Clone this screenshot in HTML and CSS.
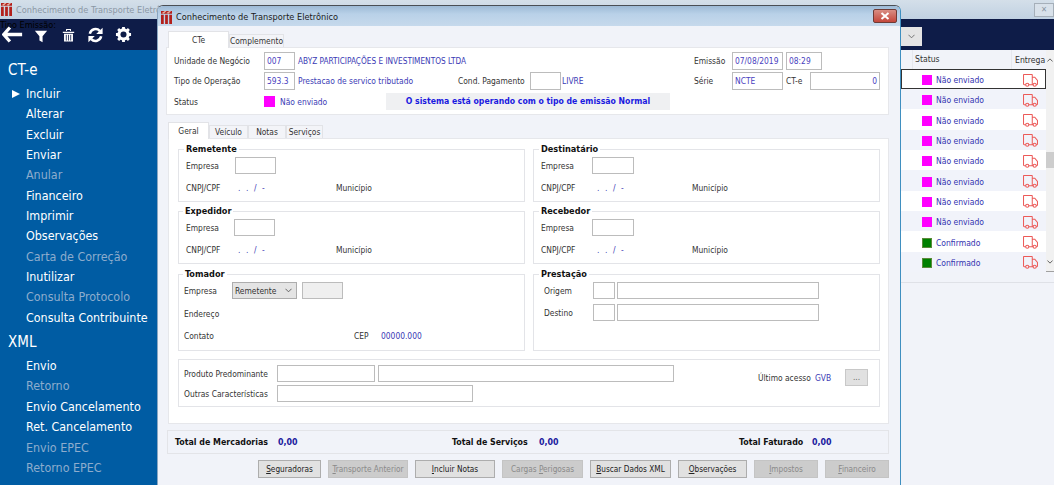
FILE: index.html
```html
<!DOCTYPE html>
<html lang="pt-BR">
<head>
<meta charset="utf-8">
<title>Conhecimento de Transporte Eletrônico</title>
<link rel="stylesheet" href="styles.css">
</head>
<body>
<svg class="defs" width="0" height="0" aria-hidden="true">
  <symbol id="truck" viewBox="0 0 16 14">
    <path d="M3 11.5H1.2a.7.7 0 0 1-.7-.7V1.2A.7.7 0 0 1 1.2.5h8a.7.7 0 0 1 .7.7v10.3H6M10 3.5h2.6l2.9 3.4v4a.6.6 0 0 1-.6.6H14M11 11.5h-1" fill="none" stroke="currentColor" stroke-width="1.1"/>
    <circle cx="4.5" cy="11.6" r="1.7" fill="none" stroke="currentColor" stroke-width="1.1"/>
    <circle cx="12.5" cy="11.6" r="1.7" fill="none" stroke="currentColor" stroke-width="1.1"/>
  </symbol>
  <symbol id="logo" viewBox="0 0 12 14">
    <path d="M0 0h12v3H0zM0 4h3v10H0zM4.5 4h3v10h-3zM9 4h3v10H9z" fill="#b3201c"/>
    <path d="M1 2l3-2h2L3 3zM6 2l3-2h2L8 3z" fill="#e8b0a0"/>
  </symbol>
</svg>

<div class="app">
  <header class="app-title">
    <svg class="logo"><use href="#logo"/></svg>
    <span>Conhecimento de Transporte Eletrônico</span>
    <span class="app-close">✕</span>
  </header>
  <div class="toolbar">
    <span class="behind">Tipo Emissão:</span>
    <svg class="tool tool-back" viewBox="0 0 24 18"><path d="M9 1L2 9l7 8M2 9h21" fill="none" stroke="#fff" stroke-width="3.8"/></svg>
    <svg class="tool tool-filter" viewBox="0 0 16 16"><path d="M1 2h14L9.8 8.4V15L6.2 13V8.4z" fill="#fff"/></svg>
    <svg class="tool tool-trash" viewBox="0 0 16 18"><path d="M1 5h14v1.6H1zM5 1.5h6V4H9.8V2.7H6.2V4H5zM2.5 7.5h11V17h-11z" fill="#fff"/><path d="M5.3 8.8v7M8 8.8v7M10.7 8.8v7" stroke="#0e1c48" stroke-width="1"/></svg>
    <svg class="tool tool-sync" viewBox="0 0 18 18"><path d="M2.6 7.5A6.6 6.6 0 0 1 13.8 4.4M15.4 10.5A6.6 6.6 0 0 1 4.2 13.6" fill="none" stroke="#fff" stroke-width="2.8"/><path d="M17 0.8V8h-7.2zM1 17.2V10h7.2z" fill="#fff"/></svg>
    <svg class="tool tool-gear" viewBox="0 0 18 18"><circle cx="9" cy="9" r="5" fill="none" stroke="#fff" stroke-width="3"/><path d="M9 1v16M1 9h16M3.3 3.3l11.4 11.4M14.7 3.3L3.3 14.7" stroke="#fff" stroke-width="3"/><circle cx="9" cy="9" r="3.2" fill="#0e1c48"/></svg>
    <span class="tool-select"><svg viewBox="0 0 8 5"><path d="M.5.5L4 4 7.5.5" fill="none" stroke="#666"/></svg></span>
  </div>
  <div class="app-body">
    <nav class="sidebar">
      <h2 class="side-head">CT-e</h2>
      <a class="side-item current">Incluir</a>
      <a class="side-item">Alterar</a>
      <a class="side-item">Excluir</a>
      <a class="side-item">Enviar</a>
      <a class="side-item off">Anular</a>
      <a class="side-item">Financeiro</a>
      <a class="side-item">Imprimir</a>
      <a class="side-item">Observações</a>
      <a class="side-item off">Carta de Correção</a>
      <a class="side-item">Inutilizar</a>
      <a class="side-item off">Consulta Protocolo</a>
      <a class="side-item">Consulta Contribuinte</a>
      <h2 class="side-head second">XML</h2>
      <a class="side-item">Envio</a>
      <a class="side-item off">Retorno</a>
      <a class="side-item">Envio Cancelamento</a>
      <a class="side-item">Ret. Cancelamento</a>
      <a class="side-item off">Envio EPEC</a>
      <a class="side-item off">Retorno EPEC</a>
    </nav>
    <main class="list">
      <div class="list-scroll">
        <div class="list-table">
          <div class="list-head"><span class="col-status">Status</span><span class="col-entrega">Entrega</span></div>
          <div class="list-row selected"><i class="sw pink"></i><span class="row-text">Não enviado</span><svg class="truck"><use href="#truck"/></svg></div>
          <div class="list-row alt"><i class="sw pink"></i><span class="row-text">Não enviado</span><svg class="truck"><use href="#truck"/></svg></div>
          <div class="list-row"><i class="sw pink"></i><span class="row-text">Não enviado</span><svg class="truck"><use href="#truck"/></svg></div>
          <div class="list-row alt"><i class="sw pink"></i><span class="row-text">Não enviado</span><svg class="truck"><use href="#truck"/></svg></div>
          <div class="list-row"><i class="sw pink"></i><span class="row-text">Não enviado</span><svg class="truck"><use href="#truck"/></svg></div>
          <div class="list-row alt"><i class="sw pink"></i><span class="row-text">Não enviado</span><svg class="truck"><use href="#truck"/></svg></div>
          <div class="list-row"><i class="sw pink"></i><span class="row-text">Não enviado</span><svg class="truck"><use href="#truck"/></svg></div>
          <div class="list-row alt"><i class="sw pink"></i><span class="row-text">Não enviado</span><svg class="truck"><use href="#truck"/></svg></div>
          <div class="list-row"><i class="sw green"></i><span class="row-text">Confirmado</span><svg class="truck"><use href="#truck"/></svg></div>
          <div class="list-row alt"><i class="sw green"></i><span class="row-text">Confirmado</span><svg class="truck"><use href="#truck"/></svg></div>
        </div>
        <div class="scrollbar">
          <svg viewBox="0 0 8 5"><path d="M.5 4.5L4 1l3.5 3.5" fill="none" stroke="#333"/></svg>
          <span class="thumb"></span>
          <svg viewBox="0 0 8 5"><path d="M.5.5L4 4 7.5.5" fill="none" stroke="#333"/></svg>
        </div>
      </div>
      <div class="list-foot"></div>
    </main>
  </div>
</div>

<section class="dialog">
  <header class="dlg-title">
    <svg class="logo"><use href="#logo"/></svg>
    <span class="dlg-title-text">Conhecimento de Transporte Eletrônico</span>
    <span class="dlg-close"><svg viewBox="0 0 10 8"><path d="M1.5 1l7 6M8.5 1l-7 6" stroke="#fff" stroke-width="2"/></svg></span>
  </header>
  <div class="dlg-body">
    <div class="tabs tabs-top">
      <span class="tab active t-cte">CTe</span>
      <span class="tab t-comp">Complemento</span>
    </div>
    <div class="panel-top">
      <div class="row row1">
        <span class="l w90">Unidade de Negócio</span>
        <span class="in w31 val">007</span>
        <span class="v w399 sp3 caps">ABYZ PARTICIPAÇÕES E INVESTIMENTOS LTDA</span>
        <span class="l w38">Emissão</span>
        <span class="in w51 val">07/08/2019</span>
        <span class="in w36 val ml3">08:29</span>
      </div>
      <div class="row row2">
        <span class="l w90">Tipo de Operação</span>
        <span class="in w31 val">593.3</span>
        <span class="v w163 sp3">Prestacao de servico tributado</span>
        <span class="l w72">Cond. Pagamento</span>
        <span class="in w31"></span>
        <span class="v w133 sp1">LIVRE</span>
        <span class="l w38">Série</span>
        <span class="in w51 val">NCTE</span>
        <span class="l w24 ml3">CT-e</span>
        <span class="in w70 val right">0</span>
      </div>
      <div class="row row3">
        <span class="l w90">Status</span>
        <i class="sw pink big"></i>
        <span class="v w111 sp5">Não enviado</span>
        <span class="banner">O sistema está operando com o tipo de emissão Normal</span>
      </div>
    </div>

    <div class="tabs tabs-main">
      <span class="tab active t-geral">Geral</span>
      <span class="tab t-veic">Veículo</span>
      <span class="tab t-notas">Notas</span>
      <span class="tab t-serv">Serviços</span>
    </div>
    <div class="panel-main">
      <div class="group-grid">
        <div class="group h53">
          <h3 class="legend">Remetente</h3>
          <div class="g-row r1"><span class="l w49">Empresa</span><span class="in w41"></span></div>
          <div class="g-row r2"><span class="l w49">CNPJ/CPF</span><span class="v w101 sp3 mask">. . / -</span><span class="l">Município</span></div>
        </div>
        <div class="group h53">
          <h3 class="legend">Destinatário</h3>
          <div class="g-row r1"><span class="l w51">Empresa</span><span class="in w42"></span></div>
          <div class="g-row r2"><span class="l w51">CNPJ/CPF</span><span class="v w100 sp5 mask">. . / -</span><span class="l">Município</span></div>
        </div>
        <div class="group h53">
          <h3 class="legend back1">Expedidor</h3>
          <div class="g-row r1"><span class="l w48">Empresa</span><span class="in w41"></span></div>
          <div class="g-row r2"><span class="l w49">CNPJ/CPF</span><span class="v w101 sp3 mask">. . / -</span><span class="l">Município</span></div>
        </div>
        <div class="group h53">
          <h3 class="legend">Recebedor</h3>
          <div class="g-row r1"><span class="l w51">Empresa</span><span class="in w42"></span></div>
          <div class="g-row r2"><span class="l w51">CNPJ/CPF</span><span class="v w100 sp5 mask">. . / -</span><span class="l">Município</span></div>
        </div>
        <div class="group h77 tight">
          <h3 class="legend fwd1">Tomador</h3>
          <div class="g-row r1"><span class="l w48">Empresa</span><span class="select">Remetente<svg viewBox="0 0 8 5"><path d="M.5.5L4 4 7.5.5" fill="none" stroke="#555"/></svg></span><span class="in w41 gray ml5"></span></div>
          <div class="g-row r5"><span class="l">Endereço</span></div>
          <div class="g-row r3"><span class="l w170">Contato</span><span class="l w27">CEP</span><span class="v">00000.000</span></div>
        </div>
        <div class="group h77 place">
          <h3 class="legend back3">Prestação</h3>
          <div class="g-row r1"><span class="l w49">Origem</span><span class="in w22"></span><span class="in w202 ml2"></span></div>
          <div class="g-row r4"><span class="l w49">Destino</span><span class="in w22"></span><span class="in w202 ml2"></span></div>
        </div>
      </div>
      <div class="prod">
        <div class="prod-fields">
          <div class="g-row"><span class="l w93">Produto Predominante</span><span class="in w98"></span><span class="in w296 ml3"></span></div>
          <div class="g-row p2"><span class="l w93">Outras Características</span><span class="in w196"></span></div>
        </div>
        <div class="prod-access">
          <span class="l w57">Último acesso</span><span class="v w30">GVB</span>
          <span class="btn-mini">...</span>
        </div>
      </div>
    </div>

    <div class="totals">
      <b class="tl w103">Total de Mercadorias</b><b class="tv w174">0,00</b>
      <b class="tl w87">Total de Serviços</b><b class="tv w200">0,00</b>
      <b class="tl w73">Total Faturado</b><b class="tv">0,00</b>
    </div>

    <div class="actions">
      <button class="btn b63"><u>S</u>eguradoras</button>
      <button class="btn b80" disabled><u>T</u>ransporte Anterior</button>
      <button class="btn b80"><u>I</u>ncluir Notas</button>
      <button class="btn b81" disabled>Cargas <u>P</u>erigosas</button>
      <button class="btn b81"><u>B</u>uscar Dados XML</button>
      <button class="btn b69"><u>O</u>bservações</button>
      <button class="btn b64" disabled><u>I</u>mpostos</button>
      <button class="btn b64" disabled><u>F</u>inanceiro</button>
    </div>
  </div>
</section>
</body>
</html>
```
FILE: styles.css
```css
* { box-sizing: border-box; }
html, body { margin: 0; height: 100%; overflow: hidden; }
body {
  position: relative;
  width: 1054px;
  height: 485px;
  font-family: "DejaVu Sans", sans-serif;
  font-stretch: condensed;
  font-size: 8.4px;
  color: #333;
  background: #f1f3f9;
}
.defs { position: absolute; }

/* Background application window */
.app { display: flex; flex-direction: column; height: 485px; }
.app-title {
  height: 19px;
  display: flex;
  align-items: center;
  padding-left: 1px;
  background: linear-gradient(#d4dfe9, #c0d1e2);
  color: #8b97a4;
  font-size: 9.15px;
}
.logo { width: 11px; height: 13px; margin-right: 4px; flex: none; }
.app-close {
  margin-left: auto;
  width: 20px;
  height: 14px;
  border: 1px solid #a5afb9;
  background: #d8e1ea;
  color: #8b97a4;
  font-size: 8px;
  line-height: 12px;
  text-align: center;
}
.toolbar {
  position: relative;
  height: 31px;
  display: flex;
  align-items: center;
  background: #0e1c48;
}
.behind {
  position: absolute;
  left: 0;
  top: 1px;
  font-size: 9px;
  color: #000;
}
.tool { position: relative; flex: none; }
.tool-back { width: 21px; height: 17px; margin-left: 2px; }
.tool-filter { width: 14px; height: 14px; margin-left: 11px; margin-top: 3px; }
.tool-trash { width: 13px; height: 16px; margin-left: 14px; }
.tool-sync { width: 17px; height: 16px; margin-left: 12px; }
.tool-gear { width: 17px; height: 17px; margin-left: 11px; }
.tool-select {
  position: absolute;
  left: 900px;
  top: 8px;
  width: 22px;
  height: 19px;
  background: #e4e4e4;
  display: flex;
  align-items: center;
  justify-content: center;
}
.tool-select svg { width: 7px; height: 5px; }
.app-body { flex: 1; display: flex; min-height: 0; }

.sidebar {
  width: 157px;
  flex: none;
  background: #005ca3;
  padding-top: 8px;
  color: #fff;
  font-size: 12.4px;
}
.side-head {
  margin: 0;
  height: 26px;
  padding-left: 8px;
  font-size: 15px;
  font-weight: 400;
  line-height: 24px;
}
.side-head.second { margin-top: 2px; }
.side-item {
  position: relative;
  display: block;
  height: 20.35px;
  padding-left: 26px;
  line-height: 20px;
}
.side-item.off { color: #8daccd; }
.side-item.current::before {
  content: "";
  position: absolute;
  left: 12px;
  top: 6px;
  border-left: 8px solid #fff;
  border-top: 4px solid transparent;
  border-bottom: 4px solid transparent;
}

.list { flex: 1; display: flex; flex-direction: column; background: #f1f3f9; min-width: 0; }
.list-scroll { display: flex; justify-content: flex-end; height: 221px; background: #fff; border-bottom: 1px solid #a0a0a0; box-sizing: content-box; }
.list-table { width: 145px; flex: none; }
.list-head {
  height: 19px;
  display: flex;
  align-items: center;
  background: #f1f3f9;
  font-size: 8.6px;
}
.col-status {
  width: 100px;
  height: 19px;
  margin-left: 11px;
  padding-left: 2px;
  line-height: 19px;
  flex: none;
  border-left: 1px solid #e5e7ed;
  border-right: 1px solid #e5e7ed;
}
.col-entrega { padding-left: 3px; }
.list-row {
  height: 20.35px;
  display: flex;
  align-items: center;
  padding: 2px 0 0 21px;
  background: #fff;
}
.list-row.alt { background: #f1f3fa; }
.list-row.selected { outline: 1px solid #333; outline-offset: -1px; height: 20px; }
.sw { display: block; width: 10px; height: 10px; flex: none; }
.sw.big { width: 11px; height: 11px; }
.pink { background: #ff00ff; }
.green { background: #008000; border: 1px solid #5a8a3a; }
.row-text { margin-left: 4px; width: 87px; color: #3333b0; font-size: 8.5px; flex: none; }
.truck { width: 15px; height: 13px; color: #ec5a58; flex: none; }
.scrollbar {
  width: 8px;
  flex: none;
  padding-top: 8px;
  background: #f1f1f1;
  display: flex;
  flex-direction: column;
  align-items: center;
}
.scrollbar svg { width: 6px; height: 4px; flex: none; }
.thumb { width: 8px; height: 16px; margin: 90px 0 92px; background: #cdcdcd; flex: none; }
.list-foot { height: 11px; background: #f1f3f9; border-bottom: 1px solid #dfe1e7; }

/* Dialog */
.dialog {
  position: absolute;
  left: 157px;
  top: 5px;
  width: 744px;
  height: 480px;
  border: 1px solid #2d3f4f;
  border-top-color: #4a4f55;
  border-left-color: #8aa7c2;
  border-right-color: #3f8fc0;
  border-bottom: 0;
  border-radius: 6px 6px 0 0;
  background: #f1f3f9;
  display: flex;
  flex-direction: column;
}
.dlg-title {
  height: 20px;
  flex: none;
  display: flex;
  align-items: center;
  padding-left: 3px;
  border-radius: 5px 5px 0 0;
  background: linear-gradient(#9dbad6, #b9d1e8 40%, #c6d9ec);
  font-size: 9.15px;
}
.dlg-title .logo { margin-top: 2px; }
.dlg-title-text { color: #1a1a1a; padding-top: 2px; }
.dlg-close {
  margin-left: auto;
  margin-right: 3px;
  width: 24px;
  height: 14px;
  border: 1px solid #6e3b36;
  border-radius: 2px;
  background: linear-gradient(#d98e84, #c4473c);
  display: flex;
  align-items: center;
  justify-content: center;
}
.dlg-close svg { width: 10px; height: 8px; }
.dlg-body { flex: 1; min-height: 0; padding: 5px 11px 0 8px; }

.tabs { display: flex; align-items: flex-end; position: relative; z-index: 1; }
.tab {
  height: 13px;
  padding: 0;
  display: flex;
  align-items: center;
  justify-content: center;
  background: #f3f4f8;
  border: 1px solid #e2e3e7;
  border-bottom: 0;
}
.tab.active { height: 17px; background: #fff; margin-bottom: -1px; }
.tabs-top { height: 16px; margin-left: 2px; }
.t-cte { width: 61px; }
.t-comp { width: 55px; }
.t-geral { width: 41px; }
.t-veic { width: 39px; }
.t-notas { width: 38px; }
.t-serv { width: 37px; }

.panel-top {
  height: 68px;
  background: #fff;
  border: 1px solid #e6e7eb;
  padding: 4px 8px 0 7px;
}
.row { display: flex; align-items: center; height: 18px; }
.row2 { margin-top: 2px; }
.row3 { margin-top: 3px; height: 17px; }

.l, .v { flex: none; white-space: nowrap; }
.l { color: #333; }
.v { color: #3a3ab5; }
.caps { font-size: 8.2px; }
.in {
  flex: none;
  height: 18px;
  border: 1px solid #bcbcbc;
  background: #fff;
  padding: 0 2px;
  line-height: 16px;
  white-space: nowrap;
}
.val { color: #4a3fc0; }
.right { text-align: right; }
.gray { background: #efefef; }
.w22 { width: 22px; } .w24 { width: 24px; } .w27 { width: 27px; } .w30 { width: 30px; } .w31 { width: 31px; }
.w36 { width: 36px; } .w38 { width: 38px; } .w41 { width: 41px; } .w42 { width: 42px; }
.w48 { width: 48px; } .w49 { width: 49px; } .w51 { width: 51px; }
.w57 { width: 57px; } .w70 { width: 70px; } .w72 { width: 72px; } .w73 { width: 73px; }
.w87 { width: 87px; } .w90 { width: 90px; } .w93 { width: 93px; } .w98 { width: 98px; }
.w100 { width: 100px; } .w101 { width: 101px; } .w103 { width: 103px; } .w111 { width: 111px; }
.w133 { width: 133px; } .w163 { width: 163px; } .w170 { width: 170px; } .w174 { width: 174px; }
.w196 { width: 196px; } .w200 { width: 200px; } .w202 { width: 202px; } .w296 { width: 296px; }
.w399 { width: 399px; }
.sp1 { padding-left: 1px; } .sp3 { padding-left: 3px; } .sp5 { padding-left: 5px; }
.ml2 { margin-left: 2px; } .ml3 { margin-left: 3px; } .ml5 { margin-left: 5px; }
.mask { letter-spacing: 1.6px; }
.banner {
  width: 284px;
  height: 17px;
  flex: none;
  background: #eff0f2;
  color: #1a1ae0;
  font-weight: 700;
  font-size: 8.65px;
  line-height: 17px;
  text-align: center;
}

.tabs-main { height: 16px; margin: 7px 0 0 2px; }
.panel-main {
  height: 286px;
  margin-left: 2px;
  background: #fff;
  border: 1px solid #e6e7eb;
  padding: 10px 8px 0 9px;
}
.group-grid {
  display: grid;
  grid-template-columns: 347px 347px;
  column-gap: 8px;
  row-gap: 9px;
}
.group {
  border: 1px solid #e3e4e8;
  padding: 0 7px;
  background: #fff;
}
.group.tight { padding-left: 5px; }
.group.place { padding-left: 10px; }
.h53 { height: 53px; }
.h77 { height: 77px; margin-top: 1px; }
.legend {
  width: fit-content;
  height: 11px;
  margin: -6px 0 0 -2px;
  padding: 0 2px;
  background: #fff;
  font-size: 9.1px;
  font-weight: 700;
  line-height: 11px;
  color: #111;
}
.legend.back1 { margin-left: -3px; }
.legend.fwd1 { margin-left: -1px; }
.legend.back3 { margin-left: -5px; }
.g-row { display: flex; align-items: center; }
.r1 { height: 17px; margin-top: 2px; }
.r1 .in, .r4 .in, .select { height: 17px; }
.r2 { height: 17px; margin-top: 5px; }
.r3 { height: 17px; margin-top: 5px; }
.r4 { height: 17px; margin-top: 5px; }
.r5 { height: 17px; margin-top: 6px; }
.select {
  width: 65px;
  flex: none;
  display: flex;
  align-items: center;
  justify-content: space-between;
  padding: 0 4px 0 2px;
  background: #e4e4e4;
  border: 1px solid #adadad;
}
.select svg { width: 7px; height: 5px; }

.prod {
  height: 48px;
  margin-top: 8px;
  border: 1px solid #e3e4e8;
  padding: 5px 11px 0 5px;
  display: flex;
  justify-content: space-between;
}
.prod-fields { display: flex; flex-direction: column; }
.prod-fields .in { height: 17px; }
.p2 { margin-top: 3px; }
.prod-access { display: flex; align-items: center; height: 17px; margin-top: 4px; }
.btn-mini {
  width: 23px;
  height: 17px;
  background: #e1e1e1;
  border: 1px solid #c8c8c8;
  color: #666;
  text-align: center;
  line-height: 15px;
}

.totals {
  height: 24px;
  margin-top: 6px;
  margin-left: 1px;
  border: 1px solid #e3e4e8;
  display: flex;
  align-items: center;
  padding-left: 7px;
  font-size: 8.8px;
}
.tl { flex: none; color: #111; }
.tv { flex: none; color: #1a1a9e; }
.actions {
  display: flex;
  gap: 7px;
  justify-content: flex-end;
  margin-top: 6px;
}
.btn {
  height: 18px;
  padding: 0;
  flex: none;
  font: inherit;
  font-size: 8.2px;
  white-space: nowrap;
  color: #222;
  background: #e1e1e1;
  border: 1px solid #adadad;
}
.btn:disabled { background: #cccccc; border-color: #c4c4c4; color: #8a8a8a; }
.b63 { width: 63px; } .b64 { width: 64px; } .b69 { width: 69px; } .b80 { width: 80px; } .b81 { width: 81px; }
```
